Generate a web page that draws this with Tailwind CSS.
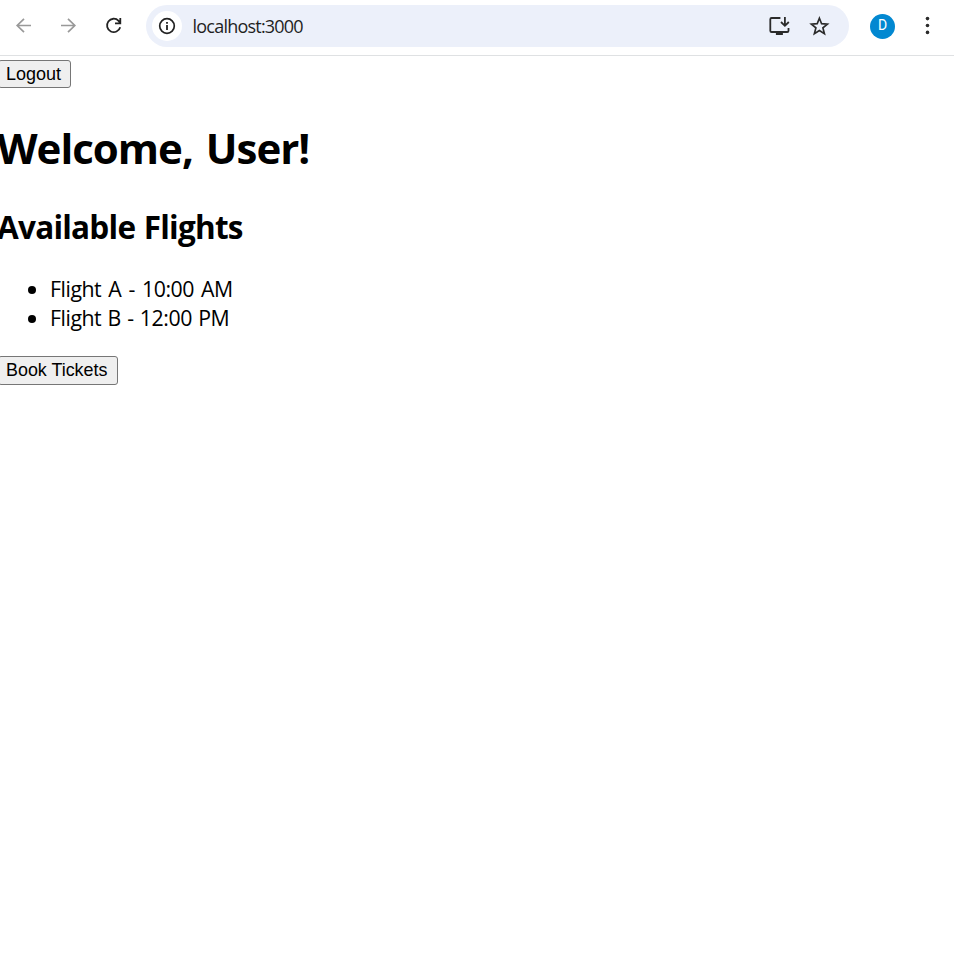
<!DOCTYPE html>
<html lang="en">
<head>
<meta charset="utf-8">
<title>localhost:3000</title>
<script src="https://cdn.jsdelivr.net/npm/@tailwindcss/browser@4"></script>
</head>
<body class="bg-white text-black overflow-hidden h-[963px] font-['Open_Sans',sans-serif]">
<header class="flex h-14 items-start border-b border-[#dfe1e3] pt-[5px]">
  <nav class="flex h-[42px] w-[146px] shrink-0 items-center pl-[13px] gap-[23px]">
    <svg class="size-[22px]" viewBox="0 0 22 22" fill="none" stroke="#999" stroke-width="1.7"><path d="M18 10.5H4M11 3.8L4.2 10.5L11 17.2"/></svg>
    <svg class="size-[22px]" viewBox="0 0 22 22" fill="none" stroke="#999" stroke-width="1.7"><path d="M3 10.5H17M10 3.8L16.8 10.5L10 17.2"/></svg>
    <svg class="size-[22px]" viewBox="0 0 22 22" fill="none" stroke="#222" stroke-width="1.8"><path d="M17.2 12.2A6.7 6.7 0 1 1 15.6 5.8L17.3 7.8M17.3 3V8.3H12"/></svg>
  </nav>
  <div class="flex h-[42px] w-[703px] shrink-0 items-center rounded-full bg-[#ecf0fa] pl-[6px] pr-[19px]">
    <span class="flex size-[30px] items-center justify-center rounded-full bg-white">
      <svg class="size-[18px]" viewBox="0 0 18 18"><circle cx="9" cy="9" r="7.3" fill="none" stroke="#222" stroke-width="1.7"/><path d="M8.1 8h1.8v5H8.1zM8.1 5h1.8v1.8H8.1z" fill="#222"/></svg>
    </span>
    <span class="ml-[10.5px] text-[18px] leading-[24px] tracking-[-0.78px] text-[#1f1f1f]">localhost:3000</span>
    <svg class="ml-auto h-[22px] w-[24px]" viewBox="-0.4 0 24 22" fill="none" stroke="#2b2b2b" stroke-width="1.8"><path d="M13 3H4.2Q2.9 3 2.9 4.3V15.7Q2.9 17 4.2 17H19.8Q21.1 17 21.1 15.7V13M17.5 2V10.5M13.6 7L17.5 10.8L21.4 7"/><path d="M8.5 17.5h7v2.5h-7z" fill="#2b2b2b" stroke="none"/></svg>
    <svg class="ml-[17px] size-[22px]" viewBox="-0.4 0 22 22" fill="none" stroke="#2b2b2b" stroke-width="1.7"><path d="M11 3.2L13.2 8.7L19 9.1L14.5 12.9L16 18.6L11 15.5L6 18.6L7.5 12.9L3 9.1L8.8 8.7Z"/></svg>
  </div>
  <div class="flex h-[42px] items-center pl-[21px]">
    <span class="flex size-[25px] items-center justify-center rounded-full bg-[#0288d1] font-[Roboto,sans-serif] text-[14px] leading-[23px] pb-px text-white">D</span>
    <svg class="ml-[22px] size-[22px]" viewBox="0 0 22 22" fill="#2b2b2b"><circle cx="10.5" cy="3.6" r="1.8"/><circle cx="10.5" cy="10.5" r="1.8"/><circle cx="10.5" cy="17.4" r="1.8"/></svg>
  </div>
</header>
<main class="pt-1">
  <button class="block h-[28px] w-[73px] -ml-0.5 rounded-[3px] border border-[#767676] bg-[#efefef] pl-[7px] text-left font-['Liberation_Sans',sans-serif] text-[18px] leading-[25px] whitespace-nowrap">Logout</button>
  <h1 class="mt-[31px] -ml-[3px] text-[42px] leading-[58px] tracking-[-1px] [word-spacing:3px] font-bold whitespace-nowrap">Welcome, User!</h1>
  <h2 class="mt-[28px] -ml-[3px] text-[31.5px] leading-[44px] tracking-[-0.76px] [word-spacing:1px] font-bold whitespace-nowrap">Available Flights</h2>
  <ul class="mt-[25px] list-disc pl-[50px] text-[21.3px] leading-[29px] tracking-[-0.45px] [word-spacing:1.2px]">
    <li class="[word-spacing:2px]">Flight A - 10:00 AM</li>
    <li>Flight B - 12:00 PM</li>
  </ul>
  <button class="mt-6 block h-[29px] w-[119.5px] -ml-0.5 rounded-[3px] border border-[#767676] bg-[#efefef] pl-[7px] text-left font-['Liberation_Sans',sans-serif] text-[17.9px] leading-[25px] whitespace-nowrap">Book Tickets</button>
</main>
</body>
</html>
